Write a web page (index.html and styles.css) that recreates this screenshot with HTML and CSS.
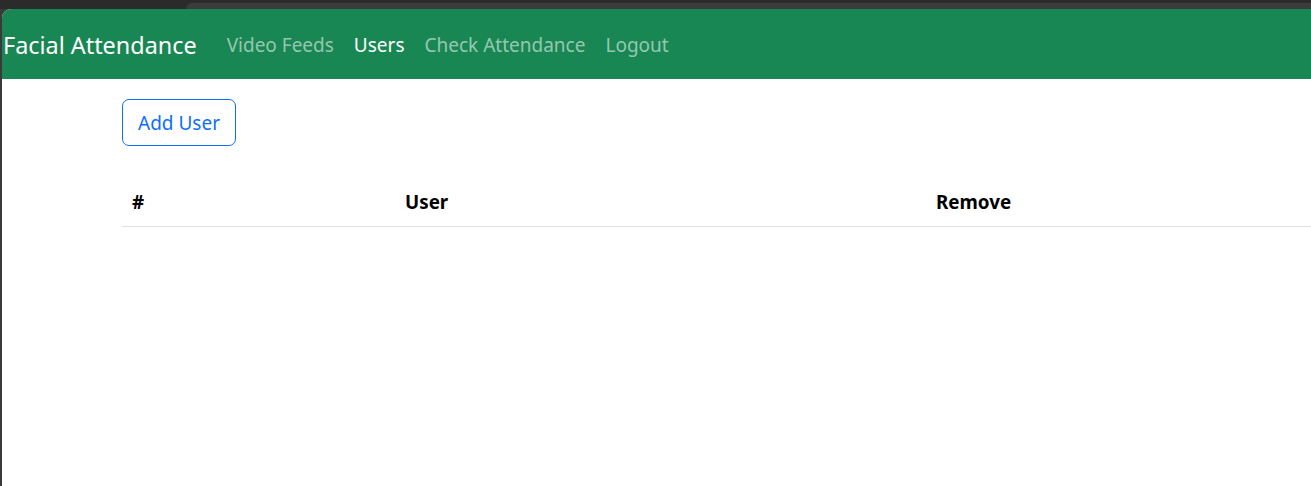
FILE: index.html
```html
<!DOCTYPE html>
<html lang="en">
<head>
<meta charset="utf-8">
<title>Users - Facial Attendance</title>
<link rel="stylesheet" href="styles.css">
</head>
<body>
<div class="chrome">
  <div class="chrome-tab"></div>
</div>
<div class="page">
  <nav class="navbar">
    <a class="brand" href="#">Facial Attendance</a>
    <ul class="nav">
      <li><a class="nav-link" href="#">Video Feeds</a></li>
      <li><a class="nav-link active" href="#">Users</a></li>
      <li><a class="nav-link" href="#">Check Attendance</a></li>
      <li><a class="nav-link" href="#">Logout</a></li>
    </ul>
  </nav>
  <main class="container">
    <button class="btn-outline" type="button">Add User</button>
    <table class="table">
      <thead>
        <tr>
          <th class="col-num">#</th>
          <th class="col-user">User</th>
          <th class="col-remove">Remove</th>
        </tr>
      </thead>
      <tbody></tbody>
    </table>
  </main>
</div>
</body>
</html>
```

FILE: styles.css
```css
html, body {
  margin: 0;
  padding: 0;
  height: 100%;
}
body {
  background: #3a3a3a;
  font-family: "Noto Sans", "Open Sans", "Liberation Sans", sans-serif;
  overflow: hidden;
  display: flex;
  flex-direction: column;
}
.chrome {
  height: 9px;
  flex: none;
  background: #2b2b2b;
  display: flex;
}
.chrome-tab {
  margin-left: 186px;
  margin-top: 3px;
  flex: 1;
  background: #3c3c3c;
  border-top-left-radius: 6px;
}
.page {
  flex: 1;
  margin-left: 2px;
  background: #ffffff;
  border-top-left-radius: 9px;
  overflow: hidden;
}
.navbar {
  height: 70px;
  background: #198754;
  display: flex;
  align-items: center;
  padding-left: 1px;
}
.brand {
  color: #ffffff;
  font-size: 23.4px;
  text-decoration: none;
  margin-right: 20px;
  white-space: nowrap;
  padding-top: 1px;
}
.nav {
  list-style: none;
  margin: 0;
  padding: 0;
  display: flex;
}
.nav-link {
  display: block;
  padding: 1px 10px 0;
  font-size: 19px;
  color: rgba(255, 255, 255, 0.55);
  text-decoration: none;
  white-space: nowrap;
}
.nav-link.active {
  color: #ffffff;
}
.container {
  padding: 20px 0 0 120px;
}
.btn-outline {
  font-family: inherit;
  font-size: 19px;
  color: #0d6efd;
  background: transparent;
  border: 1px solid #0d6efd;
  border-radius: 7px;
  height: 47px;
  width: 114px;
  padding: 0;
  cursor: pointer;
}
.table {
  margin-top: 32px;
  width: 1400px;
  border-collapse: collapse;
}
.table th {
  text-align: left;
  font-size: 18.8px;
  font-weight: 700;
  color: #000000;
  height: 48px;
  padding: 0 10px;
  border-bottom: 1px solid #dee2e6;
  box-sizing: border-box;
}
.col-num { width: 273px; }
.col-user { width: 531px; }
```
